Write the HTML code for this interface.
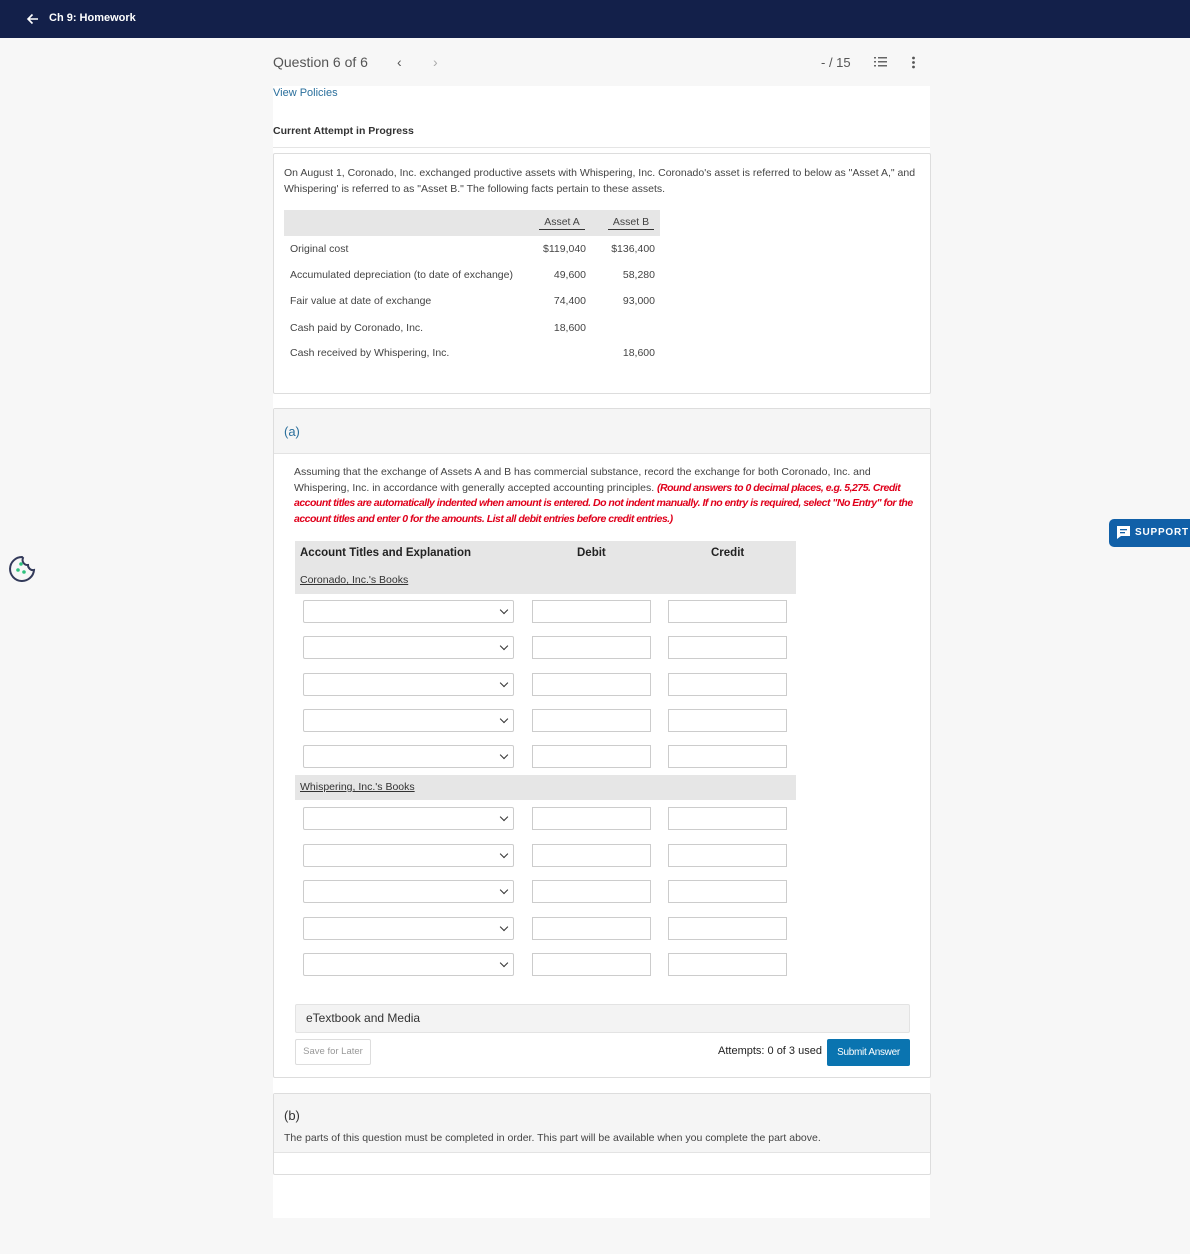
<!DOCTYPE html><html><head><meta charset="utf-8"><style>
*{box-sizing:border-box;margin:0;padding:0}
body{width:1190px;height:1254px;background:#f7f7f7;font-family:"Liberation Sans",sans-serif;color:#333;position:relative;overflow:hidden}
.a{position:absolute}
.sel{position:absolute;left:303px;width:211px;height:23px;border:1px solid #ccc;background:#fff;border-radius:2px}
.sel:after{content:"";position:absolute;right:6px;top:6px;width:5px;height:5px;border-right:1.5px solid #333;border-bottom:1.5px solid #333;transform:rotate(45deg)}
.in{position:absolute;width:119px;height:23px;border:1px solid #ccc;background:#fff}
.t{font-size:10.5px;color:#444}
.n{position:absolute;font-size:10.5px;color:#444;text-align:right}
</style></head><body>
<div class="a" style="left:0;top:0;width:1190px;height:38px;background:#13204a"></div>
<svg class="a" style="left:26px;top:12px" width="14" height="14" viewBox="0 0 14 14"><path d="M12 7H2M6.5 2.5L2 7l4.5 4.5" stroke="#fff" stroke-width="1.6" fill="none"/></svg>
<div class="a" style="left:49px;top:12px;color:#fff;font-size:11px;font-weight:bold">Ch 9: Homework</div>
<div class="a" style="left:273px;top:86px;width:657px;height:1132px;background:#fff"></div>
<div class="a" style="left:273px;top:54px;font-size:14px;color:#555">Question 6 of 6</div>
<div class="a" style="left:397px;top:54px;font-size:14px;color:#555">‹</div>
<div class="a" style="left:433px;top:54px;font-size:14px;color:#aaa">›</div>
<div class="a" style="left:821px;top:55px;font-size:13px;color:#555">- / 15</div>
<svg class="a" style="left:874px;top:56px" width="14" height="13"><g fill="#666"><rect x="0" y="1" width="2" height="1.5"/><rect x="0" y="5" width="2" height="1.5"/><rect x="0" y="9" width="2" height="1.5"/><rect x="4" y="1" width="9" height="1.5"/><rect x="4" y="5" width="9" height="1.5"/><rect x="4" y="9" width="9" height="1.5"/></g></svg>
<svg class="a" style="left:911px;top:56px" width="5" height="13"><g fill="#555"><circle cx="2.5" cy="2" r="1.4"/><circle cx="2.5" cy="6.5" r="1.4"/><circle cx="2.5" cy="11" r="1.4"/></g></svg>
<div class="a" style="left:273px;top:87px;font-size:11px;color:#2a6f9c">View Policies</div>
<div class="a" style="left:273px;top:125px;font-size:10.5px;color:#333;font-weight:bold">Current Attempt in Progress</div>
<div class="a" style="left:273px;top:147px;width:657px;height:1px;background:#e5e5e5"></div>
<div class="a" style="left:273px;top:153px;width:658px;height:241px;border:1px solid #ddd;border-radius:2px"></div>
<div class="a t" style="left:284px;top:165px;width:640px;line-height:16px">On August 1, Coronado, Inc. exchanged productive assets with Whispering, Inc. Coronado's asset is referred to below as "Asset A," and Whispering' is referred to as "Asset B." The following facts pertain to these assets.</div>
<div class="a" style="left:284px;top:210px;width:376px;height:26px;background:#e6e6e6"></div>
<div class="a t" style="left:539px;top:216px;width:46px;text-align:center;border-bottom:1px solid #333;padding-bottom:1px">Asset A</div>
<div class="a t" style="left:608px;top:216px;width:46px;text-align:center;border-bottom:1px solid #333;padding-bottom:1px">Asset B</div>
<div class="a t" style="left:290px;top:243px">Original cost</div>
<div class="a t" style="left:290px;top:269px">Accumulated depreciation (to date of exchange)</div>
<div class="a t" style="left:290px;top:295px">Fair value at date of exchange</div>
<div class="a t" style="left:290px;top:322px">Cash paid by Coronado, Inc.</div>
<div class="a t" style="left:290px;top:347px">Cash received by Whispering, Inc.</div>
<div class="n" style="left:520px;width:66px;top:243px">$119,040</div><div class="n" style="left:590px;width:65px;top:243px">$136,400</div>
<div class="n" style="left:520px;width:66px;top:269px">49,600</div><div class="n" style="left:590px;width:65px;top:269px">58,280</div>
<div class="n" style="left:520px;width:66px;top:295px">74,400</div><div class="n" style="left:590px;width:65px;top:295px">93,000</div>
<div class="n" style="left:520px;width:66px;top:322px">18,600</div>
<div class="n" style="left:590px;width:65px;top:347px">18,600</div>
<div class="a" style="left:273px;top:408px;width:658px;height:670px;border:1px solid #ddd;border-radius:2px"></div>
<div class="a" style="left:274px;top:409px;width:656px;height:45px;background:#f5f5f5;border-bottom:1px solid #e3e3e3"></div>
<div class="a" style="left:284px;top:424px;font-size:13px;color:#2a6f9c">(a)</div>
<div class="a t" style="left:294px;top:465px;width:620px;line-height:15.5px">Assuming that the exchange of Assets A and B has commercial substance, record the exchange for both Coronado, Inc. and Whispering, Inc. in accordance with generally accepted accounting principles. <i style="color:#e0001b;font-weight:bold;letter-spacing:-.5px">(Round answers to 0 decimal places, e.g. 5,275. Credit account titles are automatically indented when amount is entered. Do not indent manually. If no entry is required, select "No Entry" for the account titles and enter 0 for the amounts. List all debit entries before credit entries.)</i></div>
<div class="a" style="left:295px;top:541px;width:501px;height:53px;background:#e6e6e6"></div>
<div class="a" style="left:300px;top:547px;font-size:11.5px;font-weight:bold;color:#222">Account Titles and Explanation</div>
<div class="a" style="left:577px;top:547px;font-size:11.5px;font-weight:bold;color:#222">Debit</div>
<div class="a" style="left:711px;top:547px;font-size:11.5px;font-weight:bold;color:#222">Credit</div>
<div class="a" style="left:300px;top:574px;font-size:10.5px;color:#333;text-decoration:underline">Coronado, Inc.'s Books</div>
<div class="a" style="left:295px;top:775px;width:501px;height:25px;background:#e6e6e6"></div>
<div class="a" style="left:300px;top:781px;font-size:10.5px;color:#333;text-decoration:underline">Whispering, Inc.'s Books</div>
<div class="sel" style="top:600px"></div><div class="in" style="left:532px;top:600px"></div><div class="in" style="left:668px;top:600px"></div>
<div class="sel" style="top:636px"></div><div class="in" style="left:532px;top:636px"></div><div class="in" style="left:668px;top:636px"></div>
<div class="sel" style="top:673px"></div><div class="in" style="left:532px;top:673px"></div><div class="in" style="left:668px;top:673px"></div>
<div class="sel" style="top:709px"></div><div class="in" style="left:532px;top:709px"></div><div class="in" style="left:668px;top:709px"></div>
<div class="sel" style="top:745px"></div><div class="in" style="left:532px;top:745px"></div><div class="in" style="left:668px;top:745px"></div>
<div class="sel" style="top:807px"></div><div class="in" style="left:532px;top:807px"></div><div class="in" style="left:668px;top:807px"></div>
<div class="sel" style="top:844px"></div><div class="in" style="left:532px;top:844px"></div><div class="in" style="left:668px;top:844px"></div>
<div class="sel" style="top:880px"></div><div class="in" style="left:532px;top:880px"></div><div class="in" style="left:668px;top:880px"></div>
<div class="sel" style="top:917px"></div><div class="in" style="left:532px;top:917px"></div><div class="in" style="left:668px;top:917px"></div>
<div class="sel" style="top:953px"></div><div class="in" style="left:532px;top:953px"></div><div class="in" style="left:668px;top:953px"></div>
<div class="a" style="left:295px;top:1004px;width:615px;height:29px;background:#f3f3f3;border:1px solid #e3e3e3;border-radius:2px"></div>
<div class="a" style="left:306px;top:1011px;font-size:12px;color:#333">eTextbook and Media</div>
<div class="a" style="left:295px;top:1039px;width:76px;height:26px;border:1px solid #ddd;border-radius:2px;font-size:9.5px;color:#999;text-align:center;line-height:24px">Save for Later</div>
<div class="a" style="left:718px;top:1045px;font-size:11px;color:#222">Attempts: 0 of 3 used</div>
<div class="a" style="left:827px;top:1039px;width:83px;height:27px;background:#0a74b0;border-radius:2px;font-size:10px;color:#fff;text-align:center;line-height:27px;letter-spacing:-.3px">Submit Answer</div>
<div class="a" style="left:273px;top:1093px;width:658px;height:82px;border:1px solid #ddd;border-radius:2px"></div>
<div class="a" style="left:274px;top:1094px;width:656px;height:59px;background:#f5f5f5;border-bottom:1px solid #e3e3e3"></div>
<div class="a" style="left:284px;top:1108px;font-size:13px;color:#333">(b)</div>
<div class="a t" style="left:284px;top:1132px">The parts of this question must be completed in order. This part will be available when you complete the part above.</div>
<div class="a" style="left:1109px;top:519px;width:81px;height:28px;background:#1160a8;border-radius:5px 0 0 5px"></div>
<svg class="a" style="left:1116px;top:525px" width="15" height="15"><path d="M1 1h13v10H5l-4 3z" fill="#fff"/><rect x="4" y="4" width="7" height="1.3" fill="#1160a8"/><rect x="4" y="7" width="5" height="1.3" fill="#1160a8"/></svg>
<div class="a" style="left:1135px;top:527px;font-size:10px;font-weight:bold;color:#fff;letter-spacing:.8px">SUPPORT</div>
<svg class="a" style="left:7px;top:554px" width="30" height="30" viewBox="0 0 30 30"><path d="M15 3A12 12 0 1 0 27 16 5 5 0 0 1 21 11 5 5 0 0 1 16 4z" fill="none" stroke="#333a5a" stroke-width="2"/><circle cx="14" cy="10" r="1.8" fill="#2ec27e"/><circle cx="11" cy="16" r="1.8" fill="#2ec27e"/><circle cx="17" cy="18" r="1.8" fill="#2ec27e"/></svg>
</body></html>
